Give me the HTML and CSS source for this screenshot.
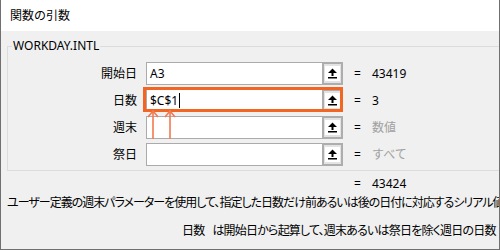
FILE: index.html
```html
<!DOCTYPE html>
<html lang="ja">
<head>
  <meta charset="UTF-8" />
  <title>関数の引数</title>
  <link rel="stylesheet" href="styles.css">
</head>
<body>
  <div class="dialog">
    <div class="titlebar">関数の引数</div>
    <div class="content">
      <fieldset class="group">
        <legend>WORKDAY.INTL</legend>
        <div class="args">
          <label class="arg-name">開始日</label>
          <div class="ref-box">
            <span class="ref-input">A3</span>
            <span class="ref-btn"><span class="ref-icon"><svg width="9" height="11" viewBox="0 0 9 11"><path d="M0 5 L4.5 0.5 L9 5 Z M3.5 4.5 H5.5 V8 H3.5 Z M0 9 H9 V10.5 H0 Z" fill="#000"/></svg></span></span>
          </div>
          <span class="eq">=</span>
          <span class="val">43419</span>

          <label class="arg-name">日数</label>
          <div class="ref-box active">
            <span class="ref-input">$C$1<span class="caret"></span></span>
            <span class="ref-btn"><span class="ref-icon"><svg width="9" height="11" viewBox="0 0 9 11"><path d="M0 5 L4.5 0.5 L9 5 Z M3.5 4.5 H5.5 V8 H3.5 Z M0 9 H9 V10.5 H0 Z" fill="#000"/></svg></span></span>
            <span class="focus-ring"></span>
            <svg class="pointers" width="26" height="32" viewBox="0 0 26 32">
              <path d="M3 2 V30 M-2 8 L3 2 L8 8 M20 2 V30 M15 8 L20 2 L25 8" fill="none" stroke="#f27a52" stroke-width="1.6"/>
            </svg>
          </div>
          <span class="eq">=</span>
          <span class="val">3</span>

          <label class="arg-name">週末</label>
          <div class="ref-box">
            <span class="ref-input"></span>
            <span class="ref-btn"><span class="ref-icon"><svg width="9" height="11" viewBox="0 0 9 11"><path d="M0 5 L4.5 0.5 L9 5 Z M3.5 4.5 H5.5 V8 H3.5 Z M0 9 H9 V10.5 H0 Z" fill="#000"/></svg></span></span>
          </div>
          <span class="eq">=</span>
          <span class="val hint">数値</span>

          <label class="arg-name">祭日</label>
          <div class="ref-box">
            <span class="ref-input"></span>
            <span class="ref-btn"><span class="ref-icon"><svg width="9" height="11" viewBox="0 0 9 11"><path d="M0 5 L4.5 0.5 L9 5 Z M3.5 4.5 H5.5 V8 H3.5 Z M0 9 H9 V10.5 H0 Z" fill="#000"/></svg></span></span>
          </div>
          <span class="eq">=</span>
          <span class="val hint">すべて</span>
        </div>
      </fieldset>

      <div class="result"><span class="eq">=</span><span class="val">43424</span></div>
      <p class="desc">ユーザー定義の週末パラメーターを使用して、指定した日数だけ前あるいは後の日付に対応するシリアル値</p>
      <p class="arg-desc"><span class="arg-desc-name">日数</span>は開始日から起算して、週末あるいは祭日を除く週日の日数</p>
    </div>
  </div>
</body>
</html>
```

FILE: styles.css
```css
html, body {
  margin: 0;
  padding: 0;
}
body {
  font-family: "Noto Sans", "Noto Sans CJK JP", sans-serif;
  font-size: 12px;
  color: #000;
  background: #f0f0f0;
}
.dialog {
  width: 500px;
  height: 250px;
  box-sizing: border-box;
  border: 1px solid #707070;
  border-top: none;
  background: #f0f0f0;
  overflow: hidden;
}
.titlebar {
  height: 31px;
  line-height: 31px;
  padding-left: 9px;
  background: #fff;
}
.content {
  padding-left: 6px;
}
.group {
  margin: 8px -40px 0 0;
  padding: 9px 0 4px 0;
  border: 1px solid #dcdcdc;
}
.group legend {
  margin-left: 4px;
  padding: 0 1px;
  line-height: 14px;
}
.args {
  display: grid;
  grid-template-columns: 138px 197px 29px 1fr;
  grid-auto-rows: 23px;
  row-gap: 4px;
  align-items: center;
}
.arg-name {
  text-align: right;
  padding-right: 9px;
  line-height: 14px;
}
.ref-box {
  display: flex;
  height: 23px;
  position: relative;
}
.ref-input {
  flex: 1;
  box-sizing: border-box;
  border: 1px solid #ababab;
  border-right: none;
  background: #fff;
  padding-left: 3px;
  line-height: 21px;
  display: flex;
  align-items: center;
}
.caret {
  display: inline-block;
  width: 1px;
  height: 15px;
  background: #000;
  margin-left: 1px;
}
.ref-btn {
  width: 21px;
  box-sizing: border-box;
  border: 2px solid #adadad;
  background: #e3e3e3;
  display: flex;
  align-items: center;
  justify-content: center;
}
.ref-icon {
  width: 15px;
  height: 15px;
  background: #fff;
  display: flex;
  align-items: center;
  justify-content: center;
}
.ref-box.active {
  z-index: 2;
}
.focus-ring {
  position: absolute;
  left: -3px;
  top: -2px;
  right: 0;
  bottom: 0;
  border: 3px solid #f26522;
}
.pointers {
  position: absolute;
  left: 4px;
  top: 20px;
  overflow: visible;
}
.eq {
  padding-left: 11px;
  line-height: 14px;
}
.val {
  line-height: 14px;
}
.hint {
  color: #a0a0a0;
}
.result {
  margin-top: 6px;
  padding-left: 347px;
  line-height: 14px;
  display: flex;
}
.result .eq {
  padding-left: 0;
  width: 18px;
}
.desc {
  margin: 5px 0 0 0;
  line-height: 14px;
  white-space: nowrap;
  font-feature-settings: "palt";
  letter-spacing: -1px;
}
.arg-desc {
  margin: 14px 0 0 0;
  padding-left: 175px;
  line-height: 14px;
  white-space: nowrap;
  font-feature-settings: "palt";
  letter-spacing: -0.8px;
}
.arg-desc-name {
  margin-right: 8px;
}
```
